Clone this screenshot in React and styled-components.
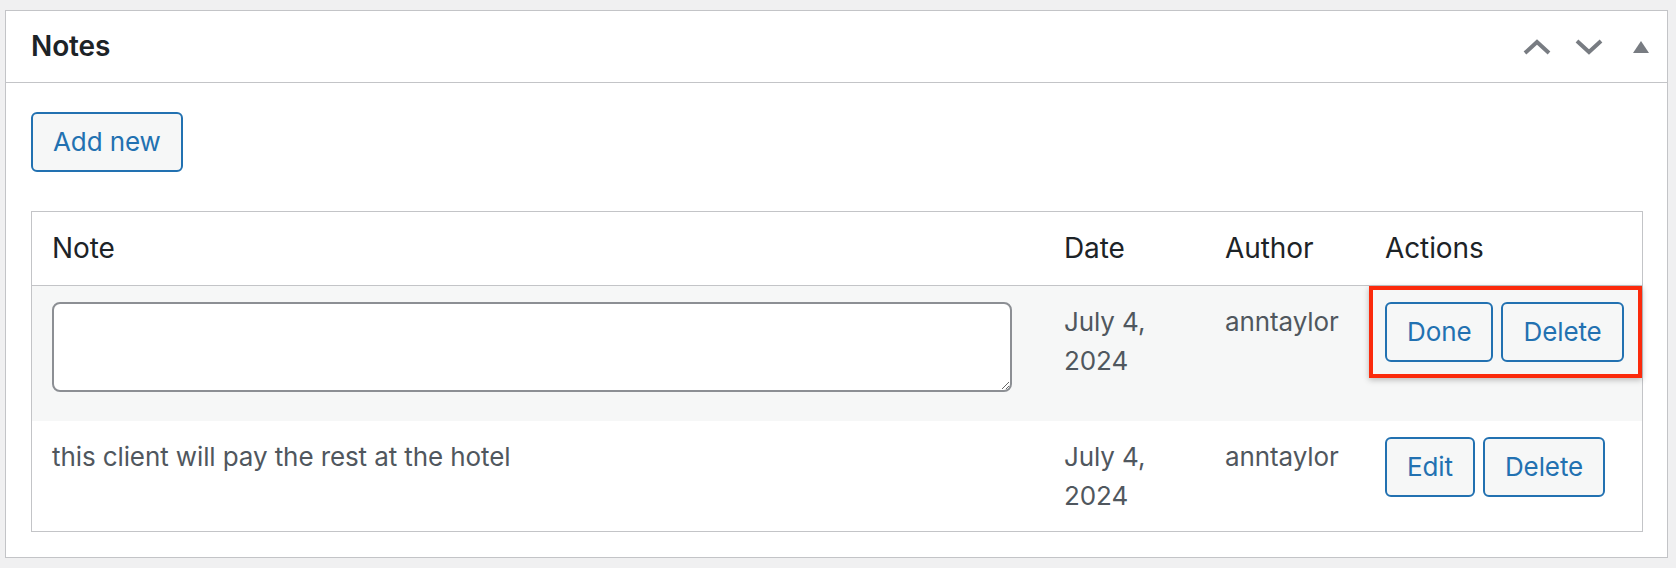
import React from "react";
import styled, { createGlobalStyle } from "styled-components";

const Global = createGlobalStyle`
  html, body { margin: 0; padding: 0; background: #f0f0f1; }
  body {
    font-family: Inter, "Noto Sans", "Liberation Sans", sans-serif;
    letter-spacing: -0.1px;
    -webkit-font-smoothing: antialiased;
  }
`;

const Page = styled.div`
  padding: 10px 8px 10px 5px;
`;

const Postbox = styled.section`
  background: #fff;
  border: 1px solid #c3c4c7;
`;

const PostboxHeader = styled.header`
  display: flex;
  align-items: center;
  justify-content: space-between;
  border-bottom: 1px solid #c3c4c7;
`;

const Title = styled.h2`
  margin: 0;
  padding: 16px 24px 16px 25px;
  font-size: 28px;
  line-height: 39px;
  font-weight: 600;
  color: #1d2327;
`;

const HandleActions = styled.div`
  display: flex;
  align-self: stretch;
`;

const HandleButton = styled.button`
  width: 52px;
  padding: 0;
  border: 0;
  background: transparent;
  display: flex;
  align-items: center;
  justify-content: center;
  color: #787c82;
  cursor: pointer;
  svg { display: block; }
`;

const Inside = styled.div`
  padding: 29px 24px 25px 25px;
`;

const Button = styled.button`
  box-sizing: border-box;
  display: inline-flex;
  align-items: center;
  min-height: 60px;
  padding: 0 20px;
  border: 2px solid #2271b1;
  border-radius: 6px;
  background: #f6f7f7;
  color: #2271b1;
  font-family: inherit;
  letter-spacing: inherit;
  font-size: 26px;
  line-height: 56px;
  cursor: pointer;
`;

const AddButton = styled(Button)`
  margin-bottom: 39px;
`;

const Table = styled.table`
  width: 100%;
  border: 1px solid #c3c4c7;
  border-spacing: 0;
  table-layout: fixed;
`;

const HeadCell = styled.th`
  text-align: left;
  font-weight: 400;
  font-size: 28px;
  line-height: 39px;
  color: #1d2327;
  padding: 17px 20px;
  border-bottom: 1px solid #c3c4c7;
`;

const Row = styled.tr`
  background: ${(p) => (p.$alt ? "#f6f7f7" : "#fff")};
`;

const Cell = styled.td`
  position: relative;
  vertical-align: top;
  padding: 16px 20px;
  font-size: 26px;
  line-height: 39px;
  color: #50575e;
`;

const NoteArea = styled.textarea`
  display: block;
  box-sizing: border-box;
  width: 960px;
  height: 90px;
  margin: 0 0 13px;
  border: 2px solid #8c8f94;
  border-radius: 8px;
  background: #fff;
  font-family: inherit;
  font-size: 26px;
`;

const Actions = styled.div`
  display: flex;
  gap: 8px;
`;

const Highlight = styled.div`
  position: absolute;
  top: 0;
  left: 4px;
  right: 0;
  height: 92px;
  box-sizing: border-box;
  border: 4px solid #fb2a0c;
  box-shadow: 0 2px 6px rgba(0, 0, 0, 0.25);
  pointer-events: none;
`;

const ChevronUp = () => (
  <svg width="28" height="16" viewBox="0 0 28 16">
    <polyline points="2,14 14,3 26,14" fill="none" stroke="currentColor" strokeWidth="4" />
  </svg>
);

const ChevronDown = () => (
  <svg width="28" height="16" viewBox="0 0 28 16">
    <polyline points="2,2 14,13 26,2" fill="none" stroke="currentColor" strokeWidth="4" />
  </svg>
);

const TriangleUp = () => (
  <svg width="16" height="12" viewBox="0 0 16 12">
    <polygon points="8,0 16,12 0,12" fill="currentColor" />
  </svg>
);

const notes = [
  { editing: true, date: "July 4, 2024", author: "anntaylor" },
  { editing: false, text: "this client will pay the rest at the hotel", date: "July 4, 2024", author: "anntaylor" },
];

export default function App() {
  return (
    <>
      <Global />
      <Page>
        <Postbox>
          <PostboxHeader>
            <Title>Notes</Title>
            <HandleActions>
              <HandleButton aria-label="Move up"><ChevronUp /></HandleButton>
              <HandleButton aria-label="Move down"><ChevronDown /></HandleButton>
              <HandleButton aria-label="Toggle panel"><TriangleUp /></HandleButton>
            </HandleActions>
          </PostboxHeader>
          <Inside>
            <AddButton>Add new</AddButton>
            <Table>
              <colgroup>
                <col style={{ width: "1012px" }} />
                <col style={{ width: "161px" }} />
                <col style={{ width: "160px" }} />
                <col />
              </colgroup>
              <thead>
                <tr>
                  <HeadCell>Note</HeadCell>
                  <HeadCell>Date</HeadCell>
                  <HeadCell>Author</HeadCell>
                  <HeadCell>Actions</HeadCell>
                </tr>
              </thead>
              <tbody>
                {notes.map((n, i) => (
                  <Row key={i} $alt={i % 2 === 0}>
                    <Cell>{n.editing ? <NoteArea /> : n.text}</Cell>
                    <Cell>{n.date}</Cell>
                    <Cell>{n.author}</Cell>
                    <Cell>
                      <Actions>
                        <Button>{n.editing ? "Done" : "Edit"}</Button>
                        <Button>Delete</Button>
                      </Actions>
                      {n.editing && <Highlight />}
                    </Cell>
                  </Row>
                ))}
              </tbody>
            </Table>
          </Inside>
        </Postbox>
      </Page>
    </>
  );
}
